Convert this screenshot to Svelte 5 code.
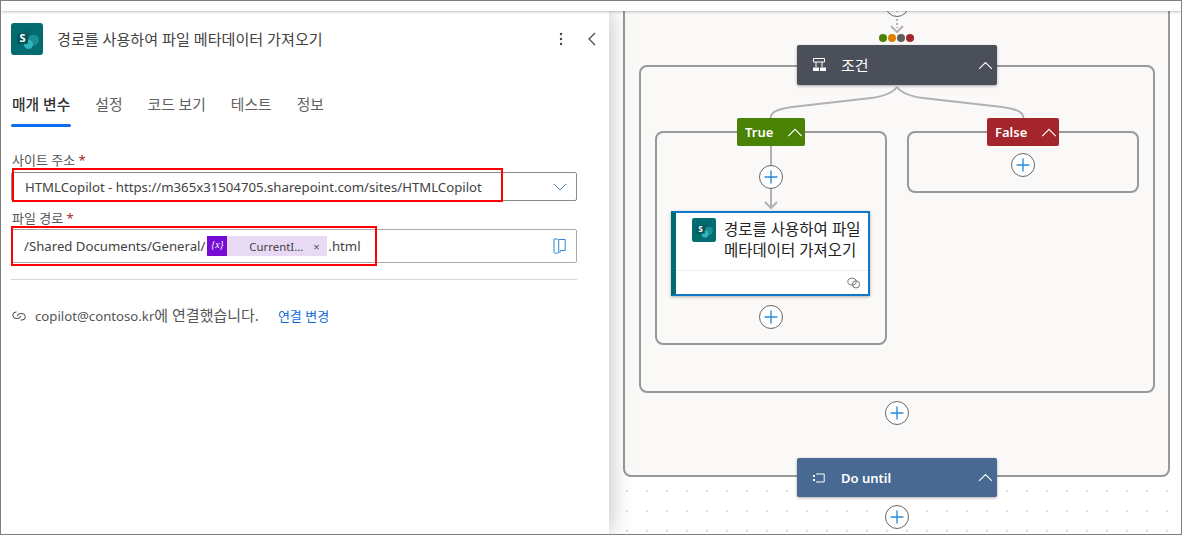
<script>
  const pluses = [
    { x: 288, y: -6 },
    { x: 162, y: 166 },
    { x: 414, y: 154 },
    { x: 162, y: 306 },
    { x: 288, y: 402 },
    { x: 288, y: 506 }
  ];
  const dots = ['#498205', '#e37d00', '#605e5c', '#a4262c'];
</script>

{#snippet sharepoint(cls)}
  <svg class={cls} viewBox="0 0 32 32" aria-hidden="true">
    <rect width="32" height="32" rx="3" fill="#036c70" />
    <circle cx="17" cy="13" r="6.5" fill="#05676b" />
    <circle cx="22.5" cy="17" r="5.5" fill="#1a8f95" />
    <circle cx="17.5" cy="21.5" r="4.5" fill="#2fb4bd" />
    <rect x="6" y="10" width="11" height="11" rx="1" fill="#03565a" />
    <text x="11.5" y="19" text-anchor="middle" class="s">S</text>
  </svg>
{/snippet}

{#snippet chevron(cls)}
  <svg class={cls} viewBox="0 0 14 8" aria-hidden="true"><path d="M1 7.2 7 1.2l6 6" fill="none" stroke="#fff" stroke-width="1" /></svg>
{/snippet}

<div class="app">
  <div class="topbar"></div>
  <div class="main">
    <aside class="panel">
      <header class="head">
        {@render sharepoint('head-icon')}
        <h1>경로를 사용하여 파일 메타데이터 가져오기</h1>
        <svg class="more" viewBox="0 0 4 14" aria-hidden="true"><circle cx="2" cy="2" r="1.2" /><circle cx="2" cy="7" r="1.2" /><circle cx="2" cy="12" r="1.2" /></svg>
        <svg class="collapse" viewBox="0 0 8 14" aria-hidden="true"><path d="M7 1 1 7l6 6" fill="none" stroke="#444" stroke-width="1.2" /></svg>
      </header>

      <nav class="tabs">
        <span class="tab active">매개 변수</span>
        <span class="tab">설정</span>
        <span class="tab">코드 보기</span>
        <span class="tab">테스트</span>
        <span class="tab">정보</span>
      </nav>

      <div class="field first">
        <div class="label">사이트 주소 <b>*</b></div>
        <div class="select">
          <span>HTMLCopilot - https://m365x31504705.sharepoint.com/sites/HTMLCopilot</span>
          <svg class="down" viewBox="0 0 14 8" aria-hidden="true"><path d="M1 1l6 6 6-6" fill="none" stroke="#5a7fa0" stroke-width="1" /></svg>
        </div>
        <div class="mark mark-a"></div>
      </div>

      <div class="field second">
        <div class="label">파일 경로 <b>*</b></div>
        <div class="input">
          <span>/Shared Documents/General/</span>
          <span class="token">
            <span class="token-icon">{'{x}'}</span>
            <span class="token-text">CurrentI...</span>
            <span class="token-x">×</span>
          </span>
          <span>.html</span>
          <svg class="book" viewBox="0 0 13 16" aria-hidden="true"><path d="M1 1h3.5l1.2 1.2V14l-1 1.2H1.7L1 14.5zM5.7 1.5h6.5v11H7.5l-.9 2.6" fill="none" stroke="#2b88d8" stroke-width="1" /></svg>
        </div>
        <div class="mark mark-b"></div>
      </div>

      <hr />

      <div class="conn">
        <svg class="conn-icon" viewBox="0 0 14 12" aria-hidden="true">
          <path d="M4.5 2H4a3.2 3.2 0 0 0 0 6.4h2a2.6 2.6 0 0 0 2.6-2.6M8.5 10h1.6a3.2 3.2 0 0 0 0-6.4h-2a2.6 2.6 0 0 0-2.6 2.6" fill="none" stroke="#444" stroke-width="1" />
        </svg>
        <span class="conn-text"><span class="latin">copilot@contoso.kr</span>에 연결했습니다.</span>
        <span class="conn-link">연결 변경</span>
      </div>
    </aside>

    <section class="canvas">
      <div class="box outer"></div>
      <div class="box cond"></div>
      <div class="box yes"></div>
      <div class="box no"></div>

      <svg class="wires" viewBox="0 0 573 523" aria-hidden="true">
        <g fill="none" stroke="#b3b0b5" stroke-width="2">
          <path d="M288 76C282 84 270 86 262 87L183 96C170 98 162 100 161.5 107" />
          <path d="M288 76C294 84 306 86 314 87L393 96C406 98 414 100 414.5 107" />
          <path d="M162 135v62" />
          <path d="M156 191l6 6 6-6" />
          <path d="M288 8v9" stroke-dasharray="2 2" />
          <path d="M282 15l6 6 6-6" />
        </g>
      </svg>

      <div class="dots">
        {#each dots as c}<i style="background:{c}"></i>{/each}
      </div>

      <div class="node dark">
        <svg class="cond-icon" viewBox="0 0 14 14" aria-hidden="true">
          <path d="M1.5 .5h11v3.5h-11zM4 4v5M10 4v5" fill="none" stroke="#fff" stroke-width="1" />
          <path d="M1 9.5h6v3.5H1zM8 9.5h6v3.5H8z" fill="#fff" />
        </svg>
        <span class="node-name">조건</span>
        {@render chevron('node-chev')}
      </div>

      <div class="branch true"><span>True</span>{@render chevron('branch-chev')}</div>
      <div class="branch false"><span>False</span>{@render chevron('branch-chev')}</div>

      <article class="card">
        <div class="card-body">
          {@render sharepoint('card-icon')}
          <p>경로를 사용하여 파일 메타데이터 가져오기</p>
        </div>
        <div class="card-foot">
          <svg class="card-link" viewBox="0 0 14 12" aria-hidden="true">
            <ellipse cx="5" cy="4.6" rx="4.2" ry="3.4" fill="none" stroke="#777" stroke-width="1" />
            <circle cx="9" cy="7.4" r="3.6" fill="none" stroke="#777" stroke-width="1" />
          </svg>
        </div>
      </article>

      <div class="node until">
        <svg class="until-icon" viewBox="0 0 12 10" aria-hidden="true">
          <path d="M3 1h8.2v8H3" fill="none" stroke="#fff" stroke-width="1" />
          <path d="M0 2h2v2H0zM0 6h2v2H0z" fill="#fff" />
        </svg>
        <span class="node-name bold">Do until</span>
        {@render chevron('node-chev')}
      </div>

      {#each pluses as p}
        <div class="plus" style="left:{p.x}px;top:{p.y}px">
          <svg viewBox="0 0 24 24" aria-hidden="true"><path d="M12 5v14M5 12h14" stroke="#2b88d8" stroke-width="1.5" /></svg>
        </div>
      {/each}
    </section>
  </div>
</div>

<style>
  :global(body) {
    margin: 0;
    background: #fff;
  }
  .app {
    box-sizing: border-box;
    width: 1182px;
    height: 535px;
    border: 1px solid #7f7f7f;
    display: flex;
    flex-direction: column;
    overflow: hidden;
    font-family: "Noto Sans", "Noto Sans CJK KR", sans-serif;
    color: #424242;
    font-size: 14px;
  }
  .topbar {
    height: 10px;
    flex: none;
    background: #fff;
    box-shadow: 0 1px 3px rgba(0, 0, 0, 0.25);
    position: relative;
    z-index: 5;
  }
  .main {
    flex: 1;
    display: flex;
    min-height: 0;
  }
  .panel {
    width: 608px;
    flex: none;
    box-sizing: border-box;
    padding: 12px 32px 0 10px;
    background: #fff;
    box-shadow: 0 0 22px rgba(0, 0, 0, 0.28);
    position: relative;
    z-index: 3;
  }
  .head {
    display: flex;
    align-items: center;
    height: 32px;
  }
  .head-icon {
    width: 32px;
    height: 32px;
    flex: none;
  }
  .s {
    font: 700 11px "Noto Sans", sans-serif;
    fill: #fff;
  }
  h1 {
    margin: 0 0 0 14px;
    font-size: 15.1px;
    font-weight: 400;
    line-height: 20px;
    color: #424242;
    flex: 1;
  }
  .more {
    width: 4px;
    height: 14px;
    fill: #444;
    margin-right: 25px;
  }
  .collapse {
    width: 8px;
    height: 14px;
    margin-right: -19px;
  }
  .tabs {
    display: flex;
    gap: 25px;
    margin-top: 39px;
    height: 39px;
    padding-left: 1px;
  }
  .tab {
    position: relative;
    font-size: 14.8px;
    line-height: 20px;
    color: #616161;
  }
  .tab.active {
    color: #333;
    font-weight: 500;
  }
  .tab.active::after {
    content: "";
    position: absolute;
    left: -1px;
    right: -1px;
    top: 30px;
    height: 3px;
    border-radius: 2px;
    background: #0f6cf0;
  }
  .field {
    position: relative;
  }
  .first {
    margin-top: 19px;
  }
  .second {
    margin-top: 9px;
  }
  .label {
    font-size: 13px;
    line-height: 16px;
    color: #555;
    padding-left: 1px;
  }
  .label b {
    font-weight: 400;
    color: #a4262c;
  }
  .select,
  .input {
    box-sizing: border-box;
    display: flex;
    align-items: center;
    border: 1px solid #a8a8a8;
    border-radius: 2px;
    background: #fff;
    color: #424242;
    font-size: 13.2px;
    white-space: nowrap;
  }
  .select {
    height: 29px;
    margin-top: 4px;
    padding-left: 13px;
    border-color: #8a8a8a;
  }
  .input {
    height: 34px;
    margin-top: 3px;
    padding-left: 12px;
  }
  .down {
    width: 14px;
    height: 8px;
    margin-left: auto;
    margin-right: 9px;
  }
  .token {
    display: inline-flex;
    align-items: center;
    height: 20px;
    margin: 0 1px 0 2px;
    background: #e8d9f5;
    font-size: 11.4px;
  }
  .token-icon {
    width: 20px;
    height: 20px;
    background: #770bd6;
    color: #fff;
    font: italic 10px/18px "Liberation Serif", serif;
    text-align: center;
  }
  .token-text {
    margin-left: 22px;
    width: 64px;
  }
  .token-x {
    width: 14px;
    color: #555;
    box-sizing: border-box;
  }
  .book {
    width: 13px;
    height: 16px;
    margin-left: auto;
    margin-right: 10px;
  }
  .mark {
    position: absolute;
    box-sizing: border-box;
    border: 2px solid #f00;
    pointer-events: none;
  }
  .mark-a {
    left: 1px;
    top: 16px;
    width: 491px;
    height: 34px;
  }
  .mark-b {
    left: 0;
    top: 16px;
    width: 366px;
    height: 40px;
  }
  hr {
    margin: 16px 0 0;
    border: 0;
    border-top: 1px solid #d6d6d6;
  }
  .conn {
    display: flex;
    align-items: center;
    margin-top: 25px;
    padding-left: 1px;
    line-height: 20px;
  }
  .conn-icon {
    width: 14px;
    height: 12px;
    margin-right: 9px;
  }
  .conn-text {
    font-size: 15px;
    color: #555;
  }
  .latin {
    font-size: 13.2px;
  }
  .conn-link {
    margin-left: 19px;
    font-size: 13px;
    color: #0f6cd8;
  }
  .canvas {
    flex: 1;
    position: relative;
    overflow: hidden;
    background-color: #fff;
    background-image: radial-gradient(circle, #cfcdcb 0.6px, transparent 0.9px);
    background-size: 20px 20px;
    background-position: 8px -10px;
  }
  .box {
    position: absolute;
    box-sizing: border-box;
    border: 2px solid #999;
    border-radius: 8px;
    background: #faf9f8;
  }
  .outer {
    left: 14px;
    top: -30px;
    width: 547px;
    height: 496px;
  }
  .cond {
    left: 30px;
    top: 54px;
    width: 516px;
    height: 328px;
  }
  .yes {
    left: 46px;
    top: 120px;
    width: 232px;
    height: 214px;
  }
  .no {
    left: 298px;
    top: 120px;
    width: 232px;
    height: 62px;
  }
  .wires {
    position: absolute;
    left: 0;
    top: 0;
    width: 573px;
    height: 523px;
  }
  .dots {
    position: absolute;
    left: 270px;
    top: 23px;
    display: flex;
    gap: 1px;
  }
  .dots i {
    width: 8px;
    height: 8px;
    border-radius: 50%;
  }
  .node {
    position: absolute;
    left: 188px;
    width: 200px;
    height: 40px;
    box-sizing: border-box;
    display: flex;
    align-items: center;
    border-radius: 2px;
    color: #fff;
    box-shadow: 0 1px 3px rgba(0, 0, 0, 0.35);
  }
  .dark {
    top: 34px;
    background: #4a4f5a;
  }
  .until {
    top: 447px;
    height: 39px;
    background: #486991;
  }
  .cond-icon {
    width: 14px;
    height: 14px;
    margin-left: 15px;
  }
  .until-icon {
    width: 12px;
    height: 10px;
    margin-left: 16px;
  }
  .node-name {
    margin-left: 15px;
    padding-bottom: 2px;
    font-size: 15px;
  }
  .node-name.bold {
    margin-left: 16px;
    padding-bottom: 0;
    font-weight: 600;
    font-size: 13px;
  }
  :global(.node-chev) {
    width: 15px;
    height: 9px;
    margin-left: auto;
    margin-right: 4px;
  }
  .branch {
    position: absolute;
    top: 107px;
    height: 28px;
    box-sizing: border-box;
    display: flex;
    align-items: center;
    padding-left: 8px;
    border-radius: 2px;
    color: #fff;
    font-size: 13px;
    font-weight: 600;
  }
  .true {
    left: 128px;
    width: 68px;
    background: #498205;
  }
  .false {
    left: 378px;
    width: 72px;
    background: #a4262c;
  }
  :global(.branch-chev) {
    width: 16px;
    height: 9px;
    margin-left: auto;
    margin-right: 2px;
  }
  .card {
    position: absolute;
    left: 62px;
    top: 200px;
    width: 199px;
    height: 85px;
    box-sizing: border-box;
    border: 2px solid #0f78c8;
    border-left: 5px solid #036c70;
    background: #fff;
    box-shadow: 0 1px 3px rgba(0, 0, 0, 0.3);
    display: flex;
    flex-direction: column;
  }
  .card-body {
    flex: 1;
    display: flex;
    padding: 5px 0 0 16px;
    box-sizing: border-box;
    border-bottom: 1px solid #eee;
    min-height: 0;
  }
  :global(.card-icon) {
    width: 24px;
    height: 24px;
    flex: none;
  }
  .card-body p {
    margin: 1px 0 0 8px;
    font-size: 15.5px;
    line-height: 21px;
    color: #242424;
  }
  .card-foot {
    height: 23px;
    flex: none;
    display: flex;
    align-items: center;
    justify-content: flex-end;
    padding-right: 7px;
  }
  .card-link {
    width: 14px;
    height: 12px;
  }
  .plus {
    position: absolute;
    box-sizing: border-box;
    width: 24px;
    height: 24px;
    border: 1px solid #666;
    border-radius: 50%;
    background: #fff;
    transform: translate(-50%, -50%);
  }
  .plus svg {
    display: block;
    width: 22px;
    height: 22px;
  }
</style>
